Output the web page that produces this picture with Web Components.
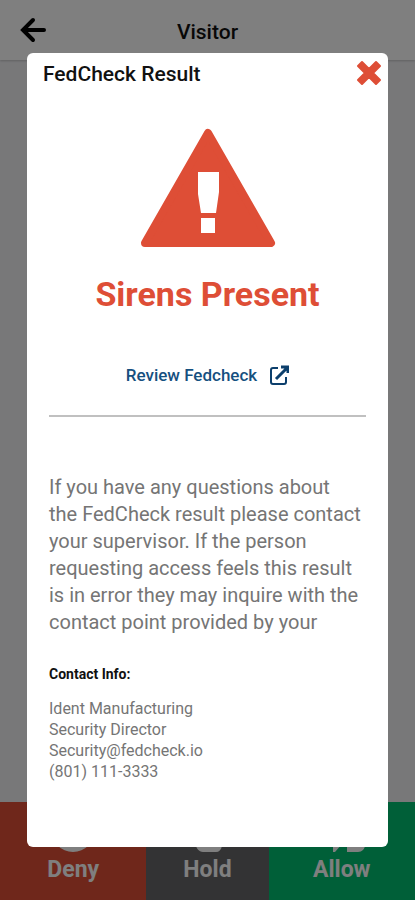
<!DOCTYPE html>
<html lang="en">
<head>
<meta charset="UTF-8">
<meta name="viewport" content="width=device-width, initial-scale=1">
<title>FedCheck Result</title>
<style>
    :root {
        --white: #ffffff;
        --page: #f0f0f3;
        --danger: #de4e36;
        --neutral: #666668;
        --success: #00be70;
        --link: #16507f;
        --gray: #757575;
        --black: #111111;
    }
    body {
        margin: 0;
        font-family: Roboto, sans-serif;
        background: var(--page);
        color: var(--black);
    }
</style>
</head>
<body>
<visitor-page>
    <page-header slot="header">Visitor</page-header>
    <action-bar slot="footer">
        <action-button kind="deny">Deny</action-button>
        <action-button kind="hold">Hold</action-button>
        <action-button kind="allow">Allow</action-button>
    </action-bar>
    <result-modal slot="modal">
        <span slot="title">FedCheck Result</span>
        <alert-status>Sirens Present</alert-status>
        <review-link href="#review">Review Fedcheck</review-link>
        <help-text>If you have any questions about<br>the FedCheck result please contact your supervisor. If the person requesting access feels this result is in error they may inquire with the contact point provided by your</help-text>
        <contact-info>
            <span slot="heading">Contact Info:</span>
            <span>Ident Manufacturing</span>
            <span>Security Director</span>
            <span>Security@fedcheck.io</span>
            <span>(801) 111-3333</span>
        </contact-info>
    </result-modal>
</visitor-page>

<script>
class VisitorPage extends HTMLElement {
    connectedCallback() {
        this.attachShadow({ mode: 'open' });
        this.shadowRoot.innerHTML = `
            <style>
                :host {
                    display: flex;
                    flex-direction: column;
                    position: relative;
                    min-height: 100vh;
                }
                main {
                    flex: 1;
                }
            </style>
            <slot name="header"></slot>
            <main></main>
            <slot name="footer"></slot>
            <slot name="modal"></slot>
        `;
    }
}
customElements.define('visitor-page', VisitorPage);

class PageHeader extends HTMLElement {
    connectedCallback() {
        this.attachShadow({ mode: 'open' });
        this.shadowRoot.innerHTML = `
            <style>
                :host {
                    display: block;
                }
                header {
                    display: grid;
                    grid-template-columns: 48px 1fr 48px;
                    align-items: center;
                    height: 60px;
                    background: var(--white);
                    box-shadow: 0 1px 2px rgba(0,0,0,0.2);
                }
                button {
                    display: flex;
                    justify-content: flex-end;
                    padding: 0;
                    border: 0;
                    background: none;
                    color: #000;
                    cursor: pointer;
                }
                h1 {
                    margin: 0;
                    padding-top: 4px;
                    font-size: 21px;
                    font-weight: 500;
                    line-height: 24px;
                    text-align: center;
                }
            </style>
            <header>
                <button type="button" aria-label="Back">
                    <svg width="28" height="28" viewBox="0 0 28 28" fill="none" stroke="currentColor" stroke-width="4" stroke-linecap="round" stroke-linejoin="miter">
                        <path d="M13 4L3 14L13 24M4 14H24"/>
                    </svg>
                </button>
                <h1><slot></slot></h1>
            </header>
        `;
    }
}
customElements.define('page-header', PageHeader);

class ActionBar extends HTMLElement {
    connectedCallback() {
        this.attachShadow({ mode: 'open' });
        this.shadowRoot.innerHTML = `
            <style>
                :host {
                    display: grid;
                    grid-template-columns: 6fr 5fr 6fr;
                }
            </style>
            <slot></slot>
        `;
    }
}
customElements.define('action-bar', ActionBar);

const actionIcons = {
    deny: '<path fill-rule="evenodd" d="M24 2a22 22 0 1 0 0 44a22 22 0 0 0 0-44zM15 12l9 9l9-9l3 3l-9 9l9 9l-3 3l-9-9l-9 9l-3-3l9-9l-9-9z"/>',
    hold: '<path d="M12 20V11a3 3 0 0 1 6 0V6a3 3 0 0 1 6 0V4a3 3 0 0 1 6 0v3a3 3 0 0 1 6 0v17l3-4c3-3 6 0 5 3l-5 17c-1 4-3 6-6 6H20c-4 0-8-4-8-12z"/>',
    allow: '<path d="M8 18h16v20l-7 8h-2V38zM29 19l5-15c5 0 6 4 5 9l-1 5h6c2 0 3 2 3 4v17c0 4-3 7-7 7H29z"/>'
};

class ActionButton extends HTMLElement {
    connectedCallback() {
        const kind = this.getAttribute('kind');
        this.attachShadow({ mode: 'open' });
        this.shadowRoot.innerHTML = `
            <style>
                :host {
                    display: block;
                }
                button {
                    display: flex;
                    flex-direction: column;
                    align-items: center;
                    gap: 2px;
                    width: 100%;
                    padding: 4px 0 16px;
                    border: 0;
                    color: var(--white);
                    font: 700 23px/28px Roboto, sans-serif;
                    cursor: pointer;
                }
                .deny { background: var(--danger); }
                .hold { background: var(--neutral); }
                .allow { background: var(--success); }
            </style>
            <button type="button" class="${kind}">
                <svg width="48" height="48" viewBox="0 0 48 48" fill="currentColor">${actionIcons[kind]}</svg>
                <slot></slot>
            </button>
        `;
    }
}
customElements.define('action-button', ActionButton);

class ResultModal extends HTMLElement {
    connectedCallback() {
        this.attachShadow({ mode: 'open' });
        this.shadowRoot.innerHTML = `
            <style>
                /* backdrop over the whole page */
                :host {
                    display: flex;
                    position: absolute;
                    inset: 0;
                    box-sizing: border-box;
                    padding: 53px 27px;
                    background: rgba(0,0,0,0.5);
                }
                section {
                    flex: 1;
                    border-radius: 6px;
                    background: var(--white);
                }
                header {
                    display: flex;
                    justify-content: space-between;
                    align-items: center;
                    height: 40px;
                    padding: 0 6px 0 16px;
                }
                h2 {
                    margin: 0;
                    padding-top: 2px;
                    font-size: 21px;
                    font-weight: 500;
                    line-height: 24px;
                }
                button {
                    display: flex;
                    padding: 0;
                    border: 0;
                    background: none;
                    color: var(--danger);
                    cursor: pointer;
                }
                .content {
                    padding: 0 22px;
                }
            </style>
            <section role="dialog" aria-modal="true" aria-labelledby="title">
                <header>
                    <h2 id="title"><slot name="title"></slot></h2>
                    <button type="button" aria-label="Close">
                        <svg width="26" height="26" viewBox="0 0 26 26" fill="currentColor" stroke="currentColor" stroke-width="2" stroke-linejoin="round">
                            <path d="M6 2L13 9L20 2L24 6L17 13L24 20L20 24L13 17L6 24L2 20L9 13L2 6Z"/>
                        </svg>
                    </button>
                </header>
                <div class="content"><slot></slot></div>
            </section>
        `;
    }
}
customElements.define('result-modal', ResultModal);

class AlertStatus extends HTMLElement {
    connectedCallback() {
        this.attachShadow({ mode: 'open' });
        this.shadowRoot.innerHTML = `
            <style>
                :host {
                    display: flex;
                    flex-direction: column;
                    align-items: center;
                    gap: 26px;
                    padding-top: 34px;
                    color: var(--danger);
                }
                h3 {
                    margin: 0;
                    font-size: 34px;
                    font-weight: 700;
                    line-height: 41px;
                }
            </style>
            <svg width="136" height="121" viewBox="0 0 136 121" aria-hidden="true">
                <path d="M68 6L131 116H5Z" fill="currentColor" stroke="currentColor" stroke-width="8" stroke-linejoin="round"/>
                <path d="M58 45H79V65L76 86H61L58 67ZM61 91H75V106H61Z" fill="#fff"/>
            </svg>
            <h3><slot></slot></h3>
        `;
    }
}
customElements.define('alert-status', AlertStatus);

class ReviewLink extends HTMLElement {
    connectedCallback() {
        this.attachShadow({ mode: 'open' });
        this.shadowRoot.innerHTML = `
            <style>
                :host {
                    display: flex;
                    justify-content: center;
                    padding: 48px 0 28px;
                    border-bottom: 2px solid #c0c0c0;
                }
                a {
                    display: flex;
                    align-items: center;
                    gap: 13px;
                    color: var(--link);
                    font-size: 17px;
                    font-weight: 500;
                    line-height: 24px;
                    text-decoration: none;
                }
            </style>
            <a href="${this.getAttribute('href')}">
                <slot></slot>
                <svg width="19" height="20" viewBox="0 0 19 20" fill="none" stroke="#0c3f6c" stroke-width="2" aria-hidden="true">
                    <path d="M8 3H3Q1 3 1 5V17Q1 19 3 19H14Q16 19 16 17V12"/>
                    <path d="M11 2H18V8M17 3L6 14" stroke-width="3"/>
                </svg>
            </a>
        `;
    }
}
customElements.define('review-link', ReviewLink);

class HelpText extends HTMLElement {
    connectedCallback() {
        this.attachShadow({ mode: 'open' });
        this.shadowRoot.innerHTML = `
            <style>
                :host {
                    display: block;
                    padding-top: 57px;
                    color: var(--gray);
                }
                p {
                    margin: 0;
                    font-size: 20px;
                    line-height: 27px;
                }
            </style>
            <p><slot></slot></p>
        `;
    }
}
customElements.define('help-text', HelpText);

class ContactInfo extends HTMLElement {
    connectedCallback() {
        this.attachShadow({ mode: 'open' });
        this.shadowRoot.innerHTML = `
            <style>
                :host {
                    display: block;
                    padding-top: 28px;
                }
                h4 {
                    margin: 0 0 14px;
                    font-size: 14px;
                    font-weight: 700;
                    line-height: 20px;
                }
                address {
                    display: flex;
                    flex-direction: column;
                    color: var(--gray);
                    font-size: 16px;
                    font-style: normal;
                    line-height: 21px;
                }
            </style>
            <h4><slot name="heading"></slot></h4>
            <address><slot></slot></address>
        `;
    }
}
customElements.define('contact-info', ContactInfo);
</script>
</body>
</html>
